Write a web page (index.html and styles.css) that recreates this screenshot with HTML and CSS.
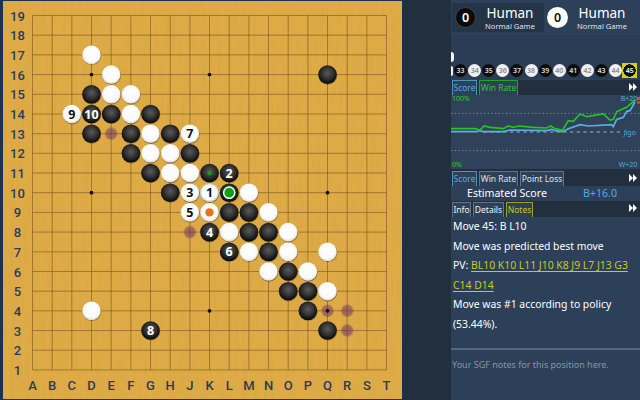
FILE: index.html
```html
<!DOCTYPE html>
<html lang="en">
<head>
<meta charset="utf-8">
<title>Go analysis</title>
<link rel="stylesheet" href="styles.css">
</head>
<body>
<main class="app">
<svg class="board" width="403" height="400" viewBox="0 0 403 400">
  <defs>
    <radialGradient id="gb" cx="50%" cy="42%" r="55%"><stop offset="0" stop-color="#5a5a5a"/><stop offset=".55" stop-color="#333"/><stop offset="1" stop-color="#0c0c0c"/></radialGradient>
    <radialGradient id="gw" cx="50%" cy="45%" r="55%"><stop offset="0" stop-color="#fff"/><stop offset=".75" stop-color="#fbfbfb"/><stop offset="1" stop-color="#d8d6d0"/></radialGradient>
    <radialGradient id="gg"><stop offset="0" stop-color="#6e2f63" stop-opacity=".6"/><stop offset=".7" stop-color="#6e2f63" stop-opacity=".5"/><stop offset="1" stop-color="#6e2f63" stop-opacity="0"/></radialGradient>
    <filter id="wood" x="0" y="0" width="100%" height="100%">
      <feTurbulence type="fractalNoise" baseFrequency=".28 .02" numOctaves="3" seed="9"/>
      <feColorMatrix values="0 0 0 0 .6  0 0 0 0 .36  0 0 0 0 .05  1.5 0 0 0 -.52"/>
    </filter>
    <g id="b"><circle cx=".3" cy=".7" r="9.4" fill="#3a2a0a" fill-opacity=".4"/><circle r="9.3" fill="url(#gb)"/></g>
    <g id="w"><circle cx=".4" cy=".8" r="9.4" fill="#3a2a0a" fill-opacity=".45"/><circle r="9.3" fill="url(#gw)"/></g>
    <circle id="g" r="7" fill="url(#gg)"/>
  </defs>
  <rect x="3" y="1" width="399" height="398" fill="#dfab47"/>
  <rect x="3" y="1" width="399" height="398" filter="url(#wood)" opacity=".45"/>
  <g stroke="#7d5a22" stroke-width=".9" stroke-opacity=".7">
    <path fill="none" d="M32.5 15.5V369.9M52.2 15.5V369.9M71.8 15.5V369.9M91.5 15.5V369.9M111.2 15.5V369.9M130.9 15.5V369.9M150.5 15.5V369.9M170.2 15.5V369.9M189.9 15.5V369.9M209.5 15.5V369.9M229.2 15.5V369.9M248.9 15.5V369.9M268.5 15.5V369.9M288.2 15.5V369.9M307.9 15.5V369.9M327.5 15.5V369.9M347.2 15.5V369.9M366.9 15.5V369.9M386.5 15.5V369.9"/>
    <path fill="none" d="M32.5 15.5H386.5M32.5 35.2H386.5M32.5 54.9H386.5M32.5 74.6H386.5M32.5 94.3H386.5M32.5 114H386.5M32.5 133.7H386.5M32.5 153.3H386.5M32.5 173H386.5M32.5 192.7H386.5M32.5 212.4H386.5M32.5 232.1H386.5M32.5 251.8H386.5M32.5 271.5H386.5M32.5 291.2H386.5M32.5 310.8H386.5M32.5 330.5H386.5M32.5 350.2H386.5M32.5 369.9H386.5"/>
  </g>
  <g fill="#111">
    <circle cx="91.5" cy="74.6" r="1.9"/><circle cx="209.5" cy="74.6" r="1.9"/><circle cx="327.5" cy="74.6" r="1.9"/>
    <circle cx="91.5" cy="192.7" r="1.9"/><circle cx="209.5" cy="192.7" r="1.9"/><circle cx="327.5" cy="192.7" r="1.9"/>
    <circle cx="91.5" cy="310.8" r="1.9"/><circle cx="209.5" cy="310.8" r="1.9"/>
  </g>
  <g class="coord" text-anchor="middle">
    <text x="17.5" y="20.5">19</text><text x="17.5" y="40.2">18</text><text x="17.5" y="59.9">17</text><text x="17.5" y="79.6">16</text><text x="17.5" y="99.3">15</text><text x="17.5" y="119">14</text><text x="17.5" y="138.7">13</text><text x="17.5" y="158.3">12</text><text x="17.5" y="178">11</text><text x="17.5" y="197.7">10</text>
    <text x="17.5" y="217.4">9</text><text x="17.5" y="237.1">8</text><text x="17.5" y="256.8">7</text><text x="17.5" y="276.5">6</text><text x="17.5" y="296.2">5</text><text x="17.5" y="315.8">4</text><text x="17.5" y="335.5">3</text><text x="17.5" y="355.2">2</text><text x="17.5" y="374.9">1</text>
    <text x="32.5" y="390">A</text><text x="52.2" y="390">B</text><text x="71.8" y="390">C</text><text x="91.5" y="390">D</text><text x="111.2" y="390">E</text><text x="130.9" y="390">F</text><text x="150.5" y="390">G</text><text x="170.2" y="390">H</text><text x="189.9" y="390">J</text><text x="209.5" y="390">K</text><text x="229.2" y="390">L</text><text x="248.9" y="390">M</text><text x="268.5" y="390">N</text><text x="288.2" y="390">O</text><text x="307.9" y="390">P</text><text x="327.5" y="390">Q</text><text x="347.2" y="390">R</text><text x="366.9" y="390">S</text><text x="386.5" y="390">T</text>
  </g>
  <use href="#g" x="111.2" y="133.7"/><use href="#g" x="189.9" y="232.1"/><use href="#g" x="327.5" y="310.8"/><use href="#g" x="347.2" y="310.8"/><use href="#g" x="347.2" y="330.5"/>
  <circle cx="327.5" cy="310.8" r="1.9" fill="#1a0a2a"/>
  <use href="#w" x="91.5" y="54.9"/><use href="#w" x="111.2" y="74.6"/><use href="#w" x="111.2" y="94.3"/><use href="#w" x="130.9" y="94.3"/>
  <use href="#w" x="71.8" y="114"/><use href="#w" x="130.9" y="114"/>
  <use href="#w" x="150.5" y="133.7"/><use href="#w" x="189.9" y="133.7"/>
  <use href="#w" x="150.5" y="153.3"/><use href="#w" x="170.2" y="153.3"/>
  <use href="#w" x="170.2" y="173"/><use href="#w" x="189.9" y="173"/>
  <use href="#w" x="189.9" y="192.7"/><use href="#w" x="209.5" y="192.7"/><use href="#w" x="248.9" y="192.7"/>
  <use href="#w" x="189.9" y="212.4"/><use href="#w" x="209.5" y="212.4"/><use href="#w" x="268.5" y="212.4"/>
  <use href="#w" x="229.2" y="232.1"/><use href="#w" x="288.2" y="232.1"/>
  <use href="#w" x="248.9" y="251.8"/><use href="#w" x="288.2" y="251.8"/><use href="#w" x="327.5" y="251.8"/>
  <use href="#w" x="268.5" y="271.5"/><use href="#w" x="307.9" y="271.5"/><use href="#w" x="327.5" y="291.2"/><use href="#w" x="91.5" y="310.8"/>
  <use href="#b" x="327.5" y="74.6"/><use href="#b" x="91.5" y="94.3"/>
  <use href="#b" x="91.5" y="114"/><use href="#b" x="111.2" y="114"/><use href="#b" x="150.5" y="114"/>
  <use href="#b" x="91.5" y="133.7"/><use href="#b" x="130.9" y="133.7"/><use href="#b" x="170.2" y="133.7"/>
  <use href="#b" x="130.9" y="153.3"/><use href="#b" x="189.9" y="153.3"/>
  <use href="#b" x="150.5" y="173"/><use href="#b" x="209.5" y="173"/><use href="#b" x="229.2" y="173"/>
  <use href="#b" x="170.2" y="192.7"/><use href="#b" x="229.2" y="192.7"/>
  <use href="#b" x="229.2" y="212.4"/><use href="#b" x="248.9" y="212.4"/>
  <use href="#b" x="209.5" y="232.1"/><use href="#b" x="248.9" y="232.1"/><use href="#b" x="268.5" y="232.1"/>
  <use href="#b" x="229.2" y="251.8"/><use href="#b" x="268.5" y="251.8"/>
  <use href="#b" x="288.2" y="271.5"/><use href="#b" x="288.2" y="291.2"/><use href="#b" x="307.9" y="291.2"/><use href="#b" x="307.9" y="310.8"/>
  <use href="#b" x="327.5" y="330.5"/><use href="#b" x="150.5" y="330.5"/>
  <circle cx="209.5" cy="173" r="2.2" fill="#1c9a1c"/>
  <circle cx="229.2" cy="192.7" r="5.6" fill="#11a011" stroke="#fff" stroke-width="1.5"/>
  <circle cx="209.5" cy="212.4" r="4.2" fill="#e8721c"/>
  <circle cx="209.5" cy="192.7" r="8.8" fill="none" stroke="#a9d4e8"/>
  <g class="num num-b" text-anchor="middle">
    <text x="91.5" y="118.5">10</text><text x="229.2" y="177.5">2</text><text x="209.5" y="236.6">4</text><text x="229.2" y="256.3">6</text><text x="150.5" y="335">8</text>
  </g>
  <g class="num num-w" text-anchor="middle">
    <text x="71.8" y="118.5">9</text><text x="189.9" y="138.2">7</text><text x="189.9" y="197.2">3</text><text x="209.5" y="197.2">1</text><text x="189.9" y="216.9">5</text>
  </g>
</svg>
<div class="strip"></div>
<aside class="panel">
  <header class="players">
    <div class="player player-active"><span class="cap cap-b">0</span><div class="who"><b>Human</b><small>Normal Game</small></div></div>
    <div class="player"><span class="cap cap-w">0</span><div class="who"><b>Human</b><small>Normal Game</small></div></div>
  </header>
  <div class="tree">
    <span class="clip clip-top"></span>
    <div class="nodes">
      <span class="clip"></span>
      <span class="n nb">33</span><span class="n nw">34</span><span class="n nb">35</span><span class="n nw">36</span><span class="n nb">37</span><span class="n nw">38</span><span class="n nb">39</span><span class="n nw">40</span><span class="n nb">41</span><span class="n nw">42</span><span class="n nb">43</span><span class="n nw">44</span><span class="n nb cur">45</span>
    </div>
  </div>
  <div class="tabs tabs-graph">
    <span class="tab tab-blue tw-score">Score</span><span class="tab tab-green tw-rate">Win Rate</span>
    <svg class="more" width="8" height="8" viewBox="0 0 8 8"><path fill="#fff" d="M0 0L4 4L0 8ZM4 0L8 4L4 8Z"/></svg>
  </div>
  <svg class="graph" width="189" height="74" viewBox="33 45 567 222">
    <rect x="33" y="45" width="567" height="222" fill="#2f4259"/>
    <g stroke="#7e8a97" stroke-width="3" stroke-dasharray="4 7"><path d="M33 100H600M33 212H600"/></g>
    <path stroke="#7e8a97" stroke-width="4" stroke-dasharray="10 10" d="M130 156H545"/>
    <path fill="none" stroke="#58b0e4" stroke-width="5" d="M33 155L110 155L120 152L130 155L190 155L210 150L320 152L335 148L345 152L368 155L385 146L420 134L445 138L515 134L520 140L530 118L550 112L560 94L570 92L585 66"/>
    <path fill="none" stroke="#22c322" stroke-width="5" d="M33 146L105 146L120 150L132 138L150 142L190 146L205 138L220 142L235 138L280 142L320 144L332 138L345 146L368 150L385 122L400 124L420 102L440 110L490 102L510 120L520 118L530 95L560 82L585 60"/>
    <rect x="591" y="51" width="9" height="9" fill="#e8443a"/><rect x="591" y="64" width="9" height="7" fill="#e8443a"/>
    <g class="glabel">
      <text class="g-green" x="36" y="63">100%</text>
      <text class="g-blue" x="542" y="63">B+20</text>
      <text class="g-blue" x="551" y="165">Jigo</text>
      <text class="g-green" x="36" y="262">0%</text>
      <text class="g-blue" x="536" y="262">W+20</text>
    </g>
  </svg>
  <div class="tabs tabs-stat">
    <span class="tab tab-blue tw-score">Score</span><span class="tab tab-grey tw-rate">Win Rate</span><span class="tab tab-grey tw-loss">Point Loss</span>
    <svg class="more" width="8" height="8" viewBox="0 0 8 8"><path fill="#fff" d="M0 0L4 4L0 8ZM4 0L8 4L4 8Z"/></svg>
  </div>
  <div class="stat"><span class="stat-name">Estimated Score</span><span class="stat-val">B+16.0</span></div>
  <div class="tabs tabs-info">
    <span class="tab tab-white tw-info">Info</span><span class="tab tab-white tw-details">Details</span><span class="tab tab-yellow tw-notes">Notes</span>
    <svg class="more" width="8" height="8" viewBox="0 0 8 8"><path fill="#fff" d="M0 0L4 4L0 8ZM4 0L8 4L4 8Z"/></svg>
  </div>
  <div class="info">
    <p>Move 45: B L10</p>
    <p>Move was predicted best move</p>
    <p>PV: <span class="pv">BL10 K10 L11 J10 K8 J9 L7 J13 G3 C14 D14</span></p>
    <p>Move was #1 according to policy (53.44%).</p>
  </div>
  <div class="notes">Your SGF notes for this position here.</div>
</aside>
</main>
</body>
</html>
```
FILE: styles.css
```css
* { box-sizing: border-box; }
html, body { margin: 0; padding: 0; }
body { width: 640px; height: 400px; overflow: hidden; background: #1b3350; }
.app { display: flex; width: 640px; height: 400px; font-family: "Noto Sans", sans-serif; color: #fff; }
.board { display: block; flex: none; }
.coord { font: 500 13px Roboto, sans-serif; fill: #293d5c; }
.num { font: 700 12.5px "Noto Sans", sans-serif; }
.num-b { fill: #fff; }
.num-w { fill: #111; }
.strip { width: 48px; flex: none; background: #222f3e; }
.panel { width: 189px; flex: none; height: 400px; background: #2c4059; display: flex; flex-direction: column; overflow: hidden; }
.players { height: 35px; flex: none; background: #2c4059; display: flex; padding: 3px 0 3px 1px; }
.player { width: 92px; display: flex; align-items: center; padding-left: 3px; }
.player + .player { width: 94px; }
.player-active { background: #253548; }
.cap { width: 21px; height: 21px; border-radius: 50%; display: flex; align-items: center; justify-content: center; font-size: 12.5px; font-weight: 600; flex: none; }
.cap-b { background: #0b0b0b; color: #fff; border: 1px solid #444; }
.cap-w { background: #fff; color: #111; }
.who { display: flex; flex-direction: column; align-items: center; width: 62px; margin-left: 3px; }
.who b { font-size: 13.5px; font-weight: 400; line-height: 16px; }
.who small { font-size: 7.6px; line-height: 10px; color: #dfe4ea; }
.tree { height: 44px; flex: none; background: #2a3d55; position: relative; display: flex; flex-direction: column; justify-content: flex-end; margin-bottom: 1px; }
.nodes { display: flex; align-items: center; height: 15px; margin-bottom: 1px; padding-left: 3px; gap: 1.1px; }
.clip { width: 2px; height: 10px; background: #f2f2f2; border-radius: 0 5px 5px 0; margin-left: -3px; }
.clip-top { position: absolute; left: 0; top: 17px; height: 10px; margin: 0; width: 3px; }
.n { width: 13px; height: 13px; border-radius: 50%; flex: none; display: flex; align-items: center; justify-content: center; font-size: 7px; font-weight: 600; }
.nodes .n:first-of-type { margin-left: 2.5px; }
.nb { background: #0d0d0d; color: #ddd; }
.nw { background: #f0f0f0; color: #888; }
.cur { color: #fff; outline: 1px solid #d3d015; border-radius: 0; background: radial-gradient(circle closest-side, #0d0d0d 92%, #d3d015 98%); }
.tabs { display: flex; align-items: flex-end; gap: 2px; flex: none; padding-left: 1px; position: relative; }
.tabs-graph { height: 15px; background: #222f3e; }
.tabs-stat { height: 17px; background: #222f3e; }
.tabs-info { height: 16px; background: #222f3e; }
.tab { font-size: 8.5px; line-height: 13px; height: 15px; padding: 0; text-align: center; border: 1px solid #66727f; border-bottom: 0; border-radius: 1px 1px 0 0; background: #2c4059; white-space: nowrap; flex: none; }
.tw-score { width: 25px; }
.tw-rate { width: 39px; }
.tw-loss { width: 44px; }
.tw-info { width: 19px; }
.tw-details { width: 31px; }
.tw-notes { width: 27px; }
.tab-blue { color: #55acdf; border-color: #4f93bd; }
.tab-green { color: #2fc52f; border-color: #23a523; }
.tab-grey { color: #dfe4ea; }
.tab-white { color: #f0f3f6; }
.tab-yellow { color: #c9c91a; border-color: #9c9c2a; }
.more { position: absolute; right: 3px; top: 3px; }
.tabs-stat .more { top: 5px; }
.graph { display: block; flex: none; }
.glabel { font-size: 21px; }
.g-green { fill: #2fc52f; }
.g-blue { fill: #55acdf; }
.stat { height: 15px; flex: none; display: flex; align-items: center; font-size: 10.6px; background: #2c4059; line-height: 15px; }
.stat-name { margin-left: 16px; width: 116px; }
.stat-val { color: #55acdf; }
.info { flex: none; height: 133px; padding: 0 2px; border-bottom: 2px solid #55677c; }
.info p { margin: 0; font-size: 10.4px; line-height: 19.5px; }
.pv { color: #c9c91a; text-decoration: underline; text-underline-offset: 2px; }
.notes { padding: 8px 1px; font-size: 9px; color: #8795a5; }
```
